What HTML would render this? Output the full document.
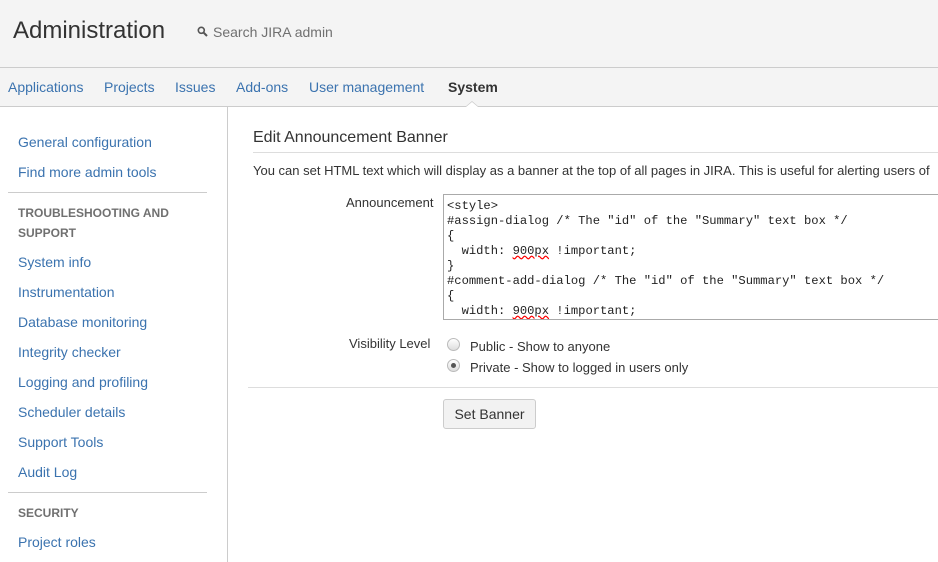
<!DOCTYPE html><html><head><style>
body{margin:0;width:938px;height:562px;overflow:hidden;font-family:"Liberation Sans",Arial,sans-serif;font-size:14px;color:#333;background:#fff;position:relative}
.a{position:absolute;white-space:nowrap}
#hdr{position:absolute;left:0;top:0;width:938px;height:67px;background:#f4f4f4;border-bottom:1px solid #ccc}
#nav{position:absolute;left:0;top:68px;width:938px;height:38px;background:#f4f4f4;border-bottom:1px solid #ccc}
#nav span{position:absolute;top:11px;color:#3b73af;font-size:14px}
#side{position:absolute;left:0;top:107px;width:227px;height:455px;border-right:1px solid #ccc}
.l{position:absolute;left:18px;color:#3b73af;font-size:14px}
.h{position:absolute;left:18px;font-size:12px;font-weight:bold;color:#707070;line-height:20px}
.hr{position:absolute;left:8px;width:199px;border-top:1px solid #ccc}
pre{margin:0;font-family:"Liberation Mono",monospace;font-size:12.15px;line-height:15px;color:#222}
.r{position:absolute;width:11px;height:11px;border-radius:50%;border:1px solid #bbb;background:linear-gradient(#fff,#ddd)}
</style></head><body>
<div id="hdr"></div>
<div class="a" style="left:13px;top:17px;font-size:24px;color:#333">Administration</div>
<svg class="a" style="left:197px;top:26px" width="11" height="11" viewBox="0 0 11 11"><circle cx="4.3" cy="4.3" r="3" fill="none" stroke="#555" stroke-width="1.6"/><line x1="6.5" y1="6.5" x2="10" y2="10" stroke="#555" stroke-width="2"/></svg>
<div class="a" style="left:213px;top:24px;font-size:14px;color:#707070">Search JIRA admin</div>
<div id="nav"><span style="left:8px">Applications</span><span style="left:104px">Projects</span><span style="left:175px">Issues</span><span style="left:236px">Add-ons</span><span style="left:309px">User management</span><span style="left:448px;color:#333;font-weight:bold">System</span></div>
<div class="a" style="left:465px;top:101px;width:0;height:0;border-left:7px solid transparent;border-right:7px solid transparent;border-bottom:6px solid #ccc"></div>
<div class="a" style="left:466px;top:102px;width:0;height:0;border-left:6px solid transparent;border-right:6px solid transparent;border-bottom:5px solid #fff"></div>
<div id="side">
<div class="l" style="top:27px">General configuration</div>
<div class="l" style="top:57px">Find more admin tools</div>
<div class="hr" style="top:85px"></div>
<div class="h" style="top:96px">TROUBLESHOOTING AND<br>SUPPORT</div>
<div class="l" style="top:147px">System info</div>
<div class="l" style="top:177px">Instrumentation</div>
<div class="l" style="top:207px">Database monitoring</div>
<div class="l" style="top:237px">Integrity checker</div>
<div class="l" style="top:267px">Logging and profiling</div>
<div class="l" style="top:297px">Scheduler details</div>
<div class="l" style="top:327px">Support Tools</div>
<div class="l" style="top:357px">Audit Log</div>
<div class="hr" style="top:385px"></div>
<div class="h" style="top:396px">SECURITY</div>
<div class="l" style="top:427px">Project roles</div>
</div>
<div class="a" style="left:253px;top:129px;font-size:16px">Edit Announcement Banner</div>
<div class="a" style="left:253px;top:152px;width:685px;border-top:1px solid #ddd"></div>
<div class="a" style="left:253px;top:163px;font-size:13px">You can set HTML text which will display as a banner at the top of all pages in JIRA. This is useful for alerting users of</div>
<div class="a" style="left:346px;top:195px;font-size:13px">Announcement</div>
<div class="a" style="left:443px;top:194px;width:500px;height:124px;border:1px solid #aaa;overflow:hidden"><pre style="padding:4px 0 0 3px">&lt;style&gt;
#assign-dialog /* The "id" of the "Summary" text box */
{
  width: <u style="text-decoration:underline wavy red">900px</u> !important;
}
#comment-add-dialog /* The "id" of the "Summary" text box */
{
  width: <u style="text-decoration:underline wavy red">900px</u> !important;</pre></div>
<div class="a" style="left:349px;top:336px;font-size:13px">Visibility Level</div>
<div class="r" style="left:447px;top:338px"></div>
<div class="a" style="left:470px;top:339px;font-size:13px">Public - Show to anyone</div>
<div class="r" style="left:447px;top:359px"><div style="position:absolute;left:3px;top:3px;width:5px;height:5px;border-radius:50%;background:#555"></div></div>
<div class="a" style="left:470px;top:360px;font-size:13px">Private - Show to logged in users only</div>
<div class="a" style="left:248px;top:387px;width:690px;border-top:1px solid #ddd"></div>
<div class="a" style="left:443px;top:399px;width:91px;height:28px;border:1px solid #ccc;border-radius:3px;background:#f2f2f2;text-align:center;line-height:28px;font-size:14px">Set Banner</div>
</body></html>
